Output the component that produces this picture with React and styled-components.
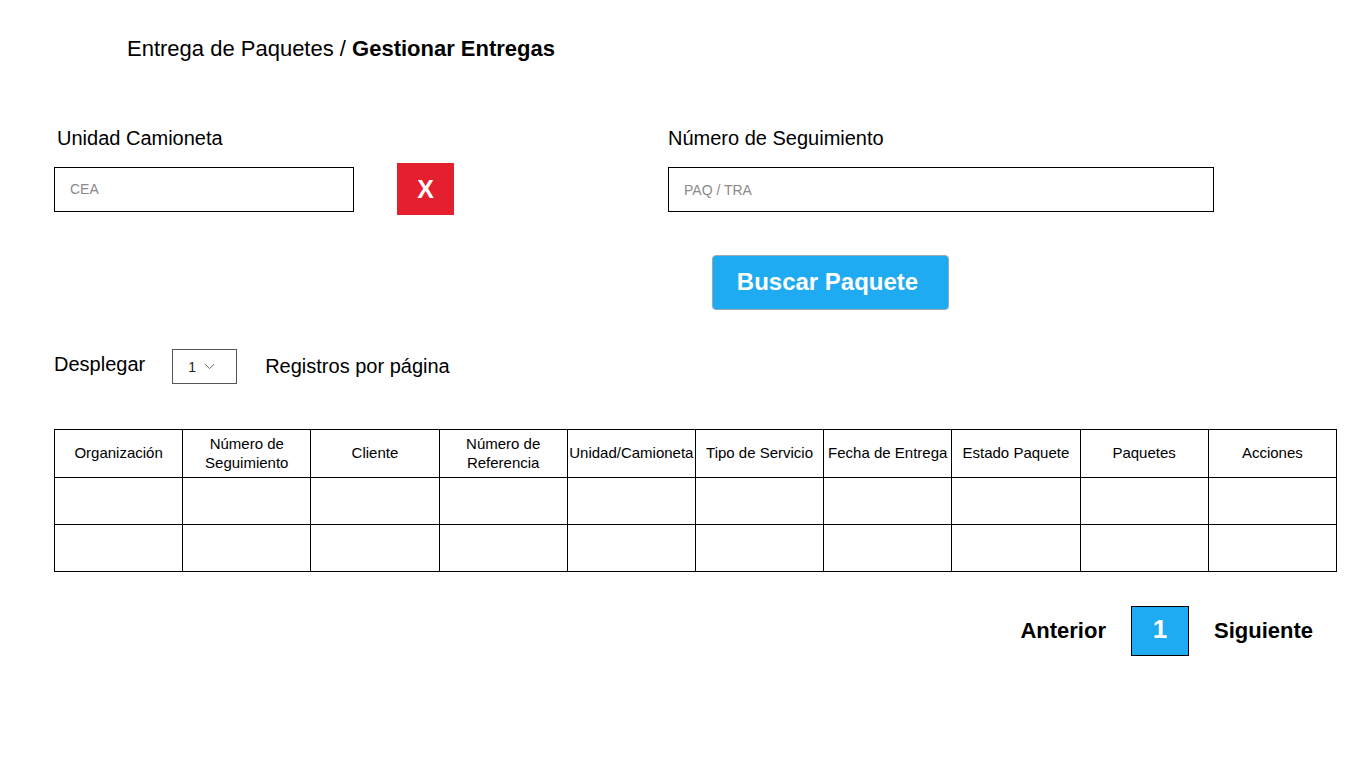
import React from 'react';
import styled, { createGlobalStyle } from 'styled-components';
import { ChevronDown } from 'lucide-react';

const GlobalStyle = createGlobalStyle`
  html, body {
    margin: 0;
    padding: 0;
    background: #ffffff;
  }
  body {
    font-family: "Liberation Sans", Arial, sans-serif;
    color: #000000;
  }
  * {
    box-sizing: border-box;
  }
`;

const Page = styled.div`
  padding: 37px 30px 40px 54px;
  width: 1366px;
`;

const Breadcrumb = styled.h1`
  margin: 0 0 0 73px;
  font-size: 22px;
  font-weight: normal;
  line-height: 24px;

  strong {
    font-weight: bold;
  }
`;

const Filters = styled.div`
  display: grid;
  grid-template-columns: 614px 1fr;
  margin-top: 66px;
`;

const Field = styled.div`
  display: flex;
  flex-direction: column;
`;

const Label = styled.label`
  font-size: 20px;
  line-height: 22px;
  margin-left: ${({ $indent }) => $indent || 0}px;
  margin-bottom: ${({ $gap }) => $gap}px;
`;

const InputRow = styled.div`
  display: flex;
  align-items: center;
  gap: 43px;
`;

const TextInput = styled.input`
  width: ${({ $width }) => $width}px;
  height: 45px;
  border: 1px solid #000000;
  padding: 0 15px;
  font-family: "Liberation Sans", Arial, sans-serif;
  font-size: 14px;
  outline: none;
  background: #fff;

  &::placeholder {
    color: #8a8a8a;
  }
`;

const ClearButton = styled.button`
  width: 57px;
  height: 52px;
  background: #e4202e;
  border: none;
  color: #ffffff;
  font-family: "Liberation Sans", Arial, sans-serif;
  font-weight: bold;
  font-size: 25px;
  cursor: pointer;
`;

const SearchButton = styled.button`
  align-self: flex-start;
  margin: 43px 0 0 44px;
  width: 237px;
  height: 55px;
  background: #1fabf1;
  border: 1px solid #9aaab5;
  border-radius: 4px;
  color: #ffffff;
  font-family: "Liberation Sans", Arial, sans-serif;
  font-weight: bold;
  font-size: 24px;
  cursor: pointer;
  padding: 0 6px 2px 0;
`;

const DisplayRow = styled.div`
  display: flex;
  align-items: center;
  margin-top: 39px;
  font-size: 20px;
`;

const RowText = styled.span`
  padding-bottom: ${({ $lift }) => $lift || 0}px;
`;

const SelectBox = styled.div`
  display: flex;
  align-items: center;
  gap: 5px;
  width: 65px;
  height: 35px;
  margin: 0 28px 0 27px;
  padding-left: 15px;
  border: 1px solid #555555;
  font-size: 14px;
  color: #222;
`;

const Table = styled.table`
  margin-top: 45px;
  width: 1283px;
  border-collapse: collapse;
  table-layout: fixed;
`;

const HeadCell = styled.th`
  height: 48px;
  border: 1px solid #000000;
  font-size: 15px;
  font-weight: normal;
  line-height: 19px;
  text-align: center;
  padding: 0 0 2px;
  white-space: ${({ $nowrap }) => ($nowrap ? 'nowrap' : 'normal')};
`;

const BodyCell = styled.td`
  height: 47px;
  border: 1px solid #000000;
`;

const Pagination = styled.div`
  display: flex;
  justify-content: flex-end;
  align-items: center;
  gap: 25px;
  margin-top: 34px;
  padding-right: 24px;
  width: 1283px;
`;

const PageLink = styled.span`
  font-size: 22px;
  font-weight: bold;
`;

const PageNumber = styled.div`
  width: 58px;
  height: 50px;
  display: flex;
  align-items: center;
  justify-content: center;
  background: #1fabf1;
  border: 1px solid #000000;
  color: #ffffff;
  font-size: 26px;
  font-weight: bold;
  padding-bottom: 4px;
`;

const columns = [
  { label: 'Organización' },
  { label: ['Número de', 'Seguimiento'] },
  { label: 'Cliente' },
  { label: ['Número de', 'Referencia'] },
  { label: 'Unidad/Camioneta', nowrap: true },
  { label: 'Tipo de Servicio', nowrap: true },
  { label: 'Fecha de Entrega', nowrap: true },
  { label: 'Estado Paquete', nowrap: true },
  { label: 'Paquetes' },
  { label: 'Acciones' },
];

const rows = [0, 1];

const App = () => {
  return (
    <>
      <GlobalStyle />
      <Page>
        <Breadcrumb>
          Entrega de Paquetes / <strong>Gestionar Entregas</strong>
        </Breadcrumb>

        <Filters>
          <Field>
            <Label $indent={3} $gap={14}>Unidad Camioneta</Label>
            <InputRow>
              <TextInput $width={300} placeholder="CEA" />
              <ClearButton>X</ClearButton>
            </InputRow>
          </Field>
          <Field>
            <Label $gap={18}>Número de Seguimiento</Label>
            <TextInput $width={546} placeholder="PAQ / TRA" />
            <SearchButton>Buscar Paquete</SearchButton>
          </Field>
        </Filters>

        <DisplayRow>
          <RowText $lift={4}>Desplegar</RowText>
          <SelectBox>
            1 <ChevronDown size={17} color="#666" strokeWidth={1.4} />
          </SelectBox>
          <RowText $lift={1}>Registros por página</RowText>
        </DisplayRow>

        <Table>
          <thead>
            <tr>
              {columns.map((col, i) => (
                <HeadCell key={i} $nowrap={col.nowrap}>
                  {Array.isArray(col.label) ? (
                    <>
                      {col.label[0]}
                      <br />
                      {col.label[1]}
                    </>
                  ) : (
                    col.label
                  )}
                </HeadCell>
              ))}
            </tr>
          </thead>
          <tbody>
            {rows.map((r) => (
              <tr key={r}>
                {columns.map((_, i) => (
                  <BodyCell key={i} />
                ))}
              </tr>
            ))}
          </tbody>
        </Table>

        <Pagination>
          <PageLink>Anterior</PageLink>
          <PageNumber>1</PageNumber>
          <PageLink>Siguiente</PageLink>
        </Pagination>
      </Page>
    </>
  );
};

export default App;
